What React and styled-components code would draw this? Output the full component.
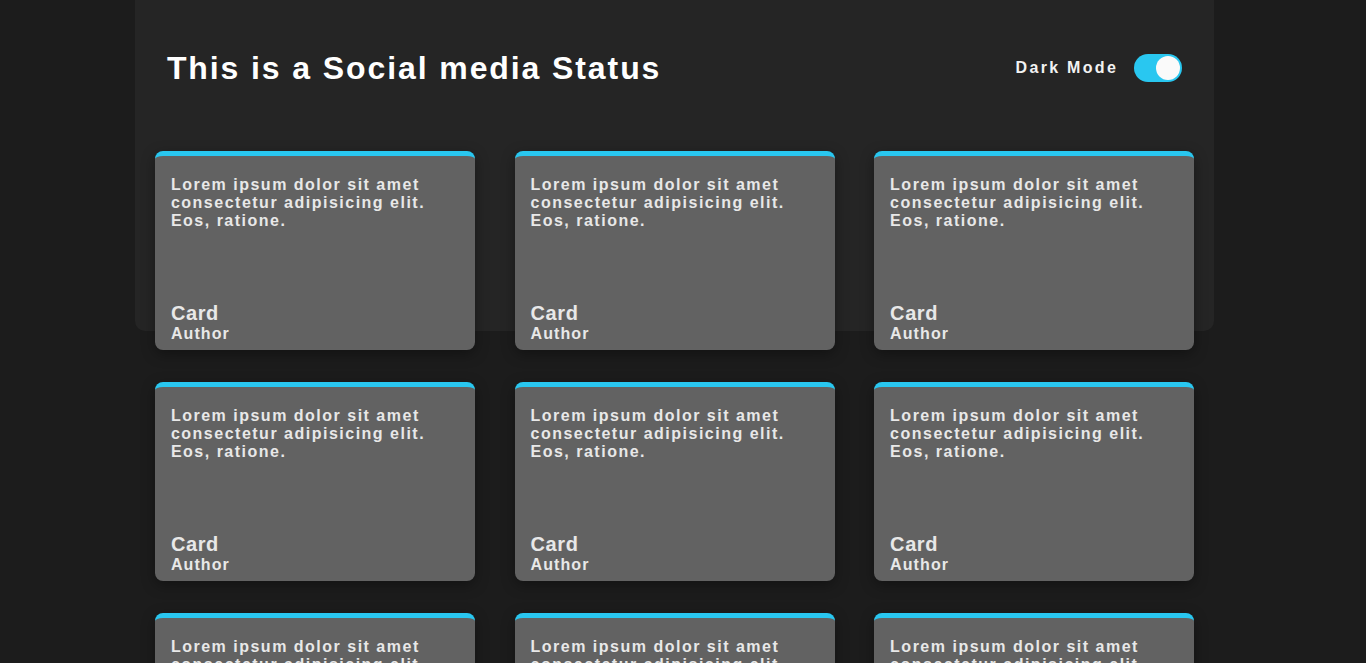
import React, { useState } from 'react';
import styled, { createGlobalStyle } from 'styled-components';

const GlobalStyle = createGlobalStyle`
  html, body {
    margin: 0;
    padding: 0;
    background: #1c1c1c;
    font-family: "Liberation Sans", Arial, Helvetica, sans-serif;
  }
  * { box-sizing: border-box; }
`;

const Page = styled.div`
  width: calc(100% - 17px);
  min-height: 100vh;
  padding-bottom: 140px;
`;

const Panel = styled.header`
  width: 80%;
  height: 331px;
  margin: 0 auto;
  background: #252525;
  border-radius: 0 0 10px 10px;
  padding: 48px 32px 0;
`;

const HeaderRow = styled.div`
  display: flex;
  align-items: center;
  justify-content: space-between;
`;

const Title = styled.h1`
  margin: 0;
  color: #ffffff;
  font-size: 32px;
  font-weight: 700;
  letter-spacing: 1.9px;
  line-height: 40px;
`;

const ModeSwitch = styled.label`
  display: flex;
  align-items: center;
  gap: 16px;
  color: #f2f2f2;
  font-size: 16px;
  font-weight: 700;
  letter-spacing: 2.3px;
  cursor: pointer;
`;

const Track = styled.span`
  position: relative;
  width: 48px;
  height: 28px;
  border-radius: 14px;
  background: ${(p) => (p.$on ? '#29c7f0' : '#888')};
  transition: background 0.2s;
`;

const Knob = styled.span`
  position: absolute;
  top: 2px;
  left: ${(p) => (p.$on ? '22px' : '2px')};
  width: 24px;
  height: 24px;
  border-radius: 50%;
  background: #fafafa;
  transition: left 0.2s;
`;

const Grid = styled.main`
  width: calc(80% - 40px);
  margin: -180px auto 0;
  display: grid;
  grid-template-columns: repeat(3, 320px);
  justify-content: space-between;
  row-gap: 32px;
`;

const Card = styled.article`
  height: 199px;
  display: flex;
  flex-direction: column;
  justify-content: space-between;
  background: #626262;
  border-top: 5px solid #29c7f0;
  border-radius: 8px;
  padding: 20px 16px 7px;
  color: #e8e8e8;
  box-shadow: 0 4px 14px rgba(0, 0, 0, 0.35);
`;

const Body = styled.p`
  margin: 0;
  font-size: 16px;
  font-weight: 700;
  line-height: 18px;
  letter-spacing: 1.5px;
`;

const CardTitle = styled.h3`
  margin: 0;
  font-size: 20px;
  font-weight: 700;
  letter-spacing: 0.6px;
  line-height: 22px;
`;

const CardAuthor = styled.span`
  display: block;
  font-size: 16px;
  font-weight: 700;
  letter-spacing: 1.1px;
  line-height: 19px;
`;

const cards = Array.from({ length: 18 }, (_, i) => ({
  id: i,
  title: 'Card',
  author: 'Author',
}));

const App = () => {
  const [dark, setDark] = useState(true);

  return (
    <Page>
      <GlobalStyle />
      <Panel>
        <HeaderRow>
          <Title>This is a Social media Status</Title>
          <ModeSwitch onClick={() => setDark(!dark)}>
            Dark Mode
            <Track $on={dark}>
              <Knob $on={dark} />
            </Track>
          </ModeSwitch>
        </HeaderRow>
      </Panel>
      <Grid>
        {cards.map((c) => (
          <Card key={c.id}>
            <Body>
              Lorem ipsum dolor sit amet
              <br />
              consectetur adipisicing elit.
              <br />
              Eos, ratione.
            </Body>
            <div>
              <CardTitle>{c.title}</CardTitle>
              <CardAuthor>{c.author}</CardAuthor>
            </div>
          </Card>
        ))}
      </Grid>
    </Page>
  );
};

export default App;
